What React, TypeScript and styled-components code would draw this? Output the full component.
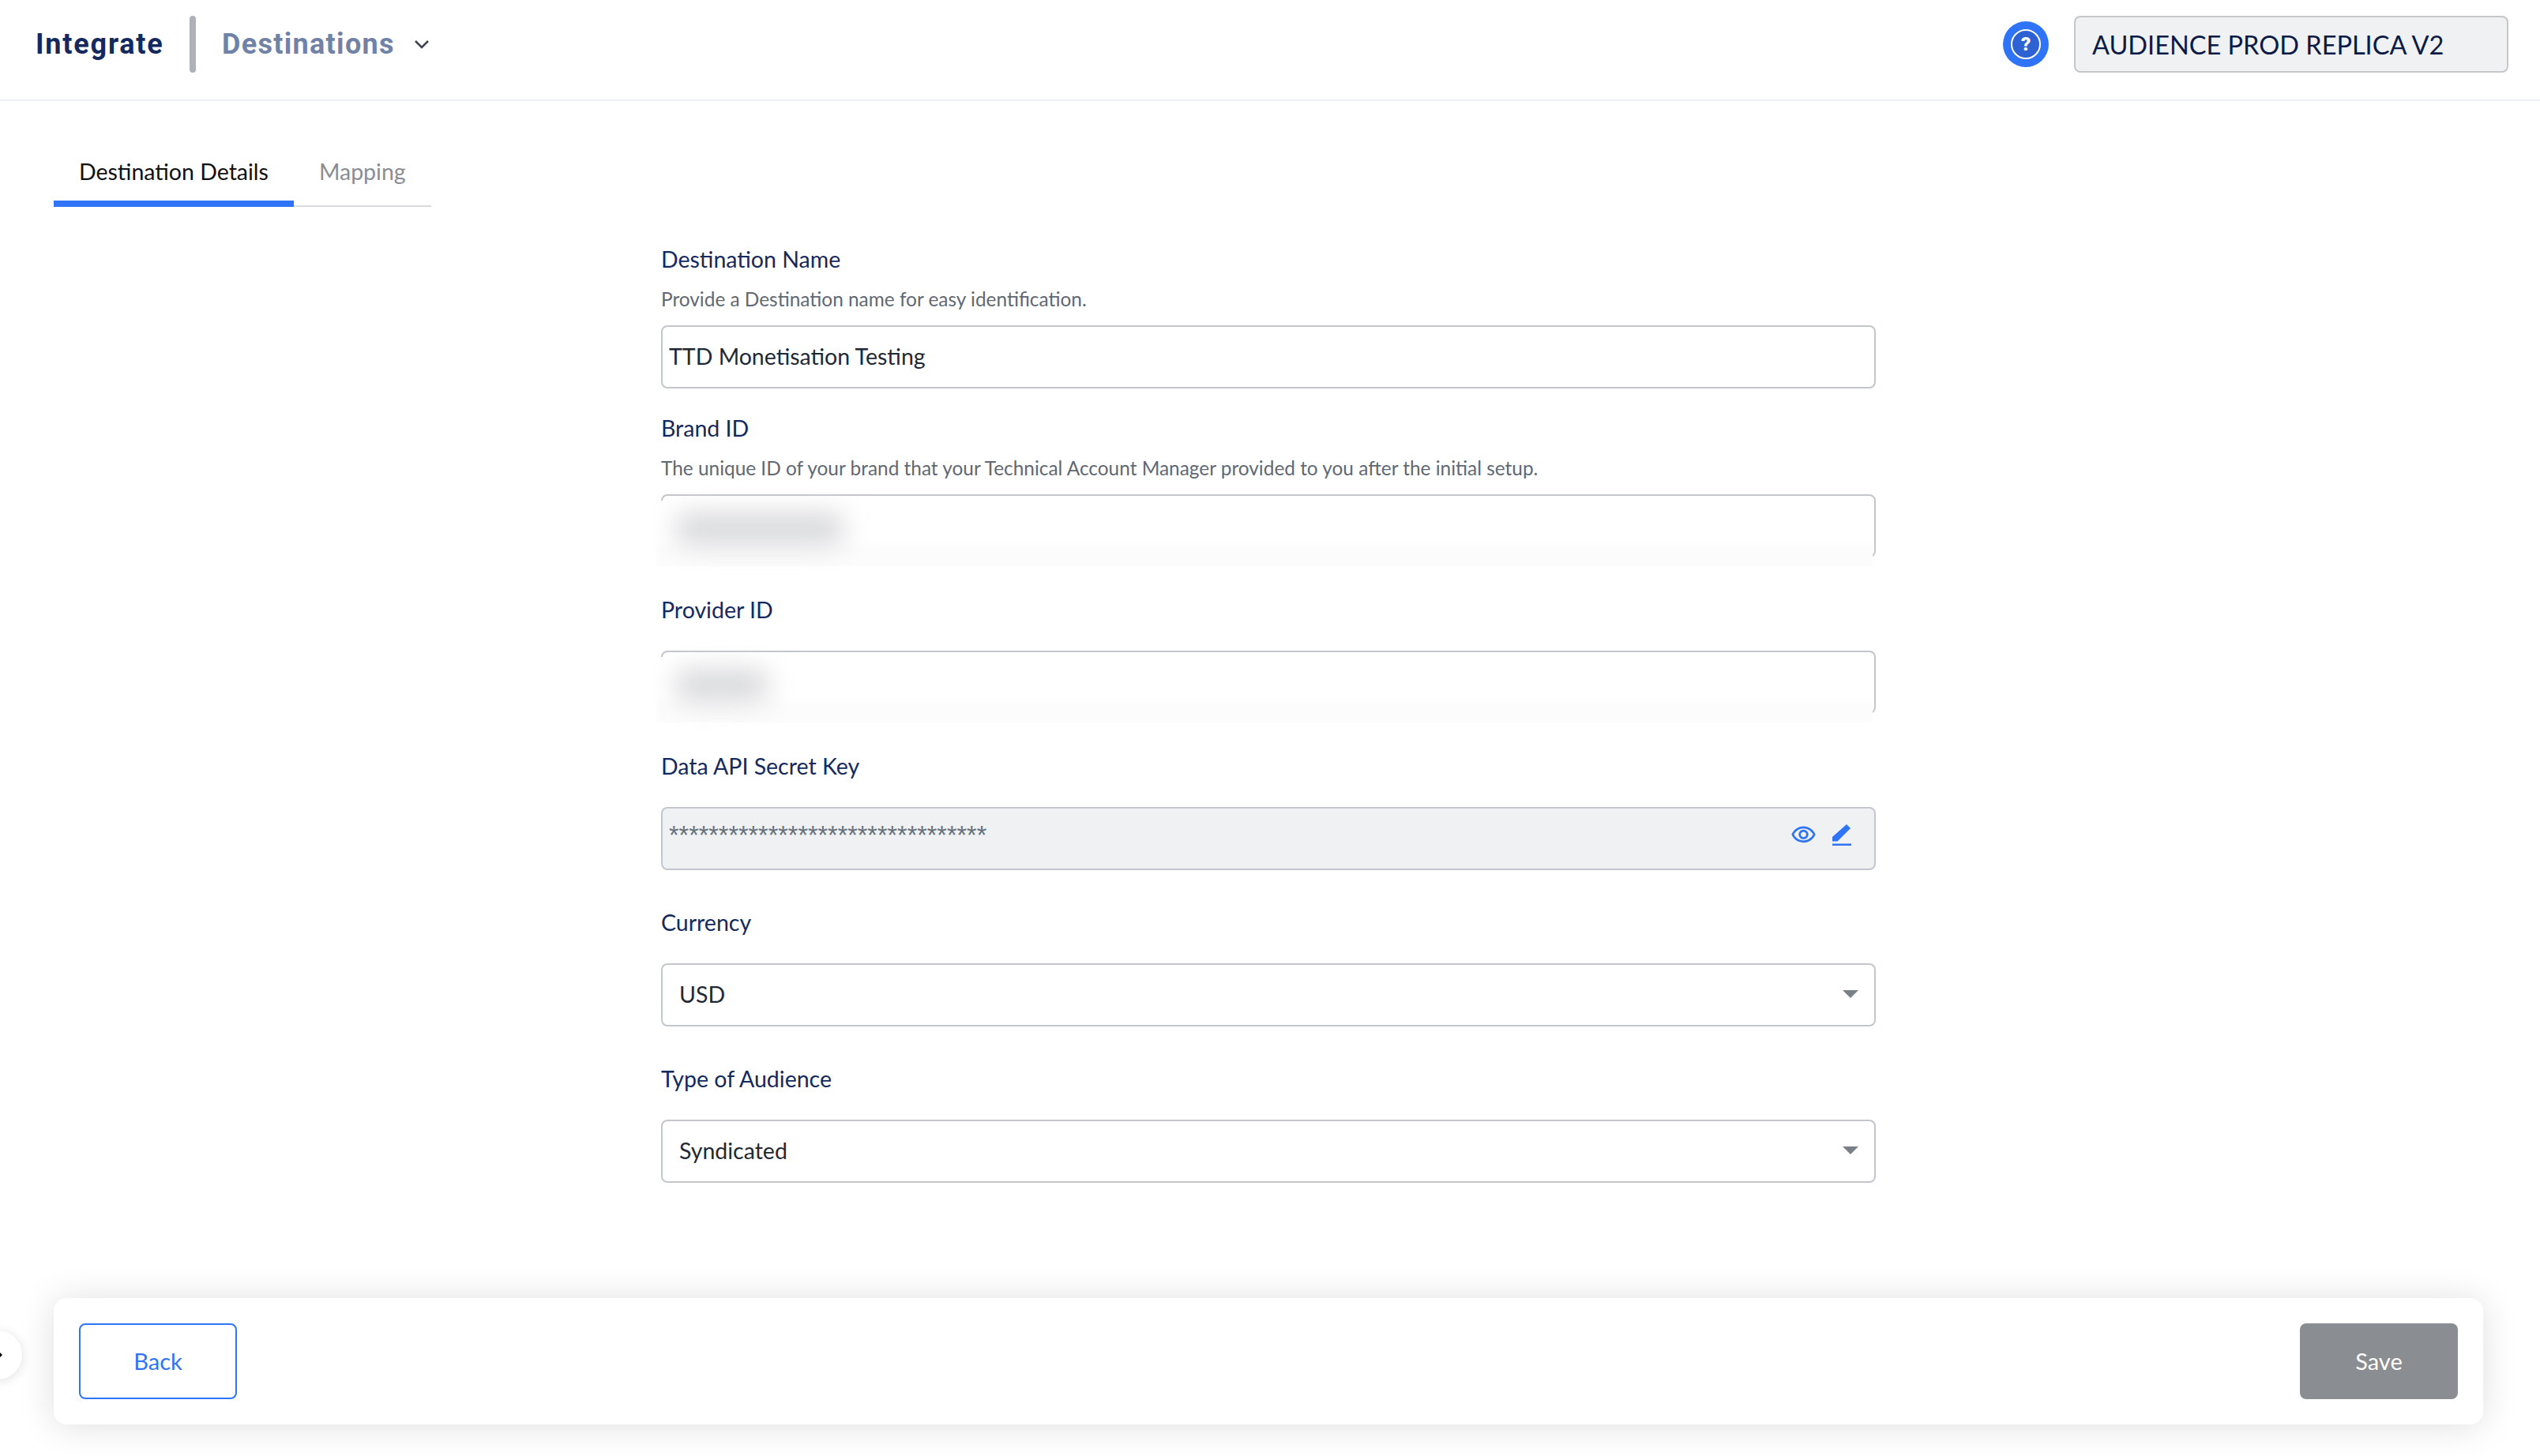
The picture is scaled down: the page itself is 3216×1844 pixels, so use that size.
import React from 'react';
import styled, { createGlobalStyle } from 'styled-components';

const GlobalStyle = createGlobalStyle`
  html, body {
    margin: 0;
    padding: 0;
    background: #fff;
    overflow: hidden;
  }
  * {
    box-sizing: border-box;
  }
`;

const App: React.FC = () => {
  return (
    <>
      <GlobalStyle />
      <Page>
        <Header>
          <HeaderLeft>
            <Brand>Integrate</Brand>
            <Divider />
            <Section>Destinations</Section>
            <Chevron viewBox="0 0 18 10">
              <polyline points="1,1 9,9 17,1" />
            </Chevron>
          </HeaderLeft>
          <HeaderRight>
            <HelpButton>
              <HelpRing>?</HelpRing>
            </HelpButton>
            <AccountSelect>AUDIENCE PROD REPLICA V2</AccountSelect>
          </HeaderRight>
        </Header>

        <Tabs>
          <Tab $active>Destination Details</Tab>
          <Tab>Mapping</Tab>
        </Tabs>

        <Form>
          <Field $compact>
            <Label>Destination Name</Label>
            <Hint>Provide a Destination name for easy identification.</Hint>
            <Input>TTD Monetisation Testing</Input>
          </Field>
          <Field>
            <Label>Brand ID</Label>
            <Hint>The unique ID of your brand that your Technical Account Manager provided to you after the initial setup.</Hint>
            <Input>
              <Redaction>
                <Smudge $width={218} />
              </Redaction>
            </Input>
          </Field>
          <Field>
            <Label>Provider ID</Label>
            <Input>
              <Redaction>
                <Smudge $width={122} />
              </Redaction>
            </Input>
          </Field>
          <Field>
            <Label>Data API Secret Key</Label>
            <Input $disabled>
              <Secret>********************************</Secret>
              <InputActions>
                <EyeIcon viewBox="0 0 24 24">
                  <path d="M12 6c3.79 0 7.17 2.13 8.82 5.5C19.17 14.87 15.79 17 12 17s-7.17-2.13-8.82-5.5C4.83 8.13 8.21 6 12 6m0-2C7 4 2.73 7.11 1 11.5 2.73 15.89 7 19 12 19s9.27-3.11 11-7.5C21.27 7.11 17 4 12 4zm0 5c1.38 0 2.5 1.12 2.5 2.5S13.38 14 12 14s-2.5-1.12-2.5-2.5S10.62 9 12 9m0-2c-2.48 0-4.5 2.02-4.5 4.5S9.52 16 12 16s4.5-2.02 4.5-4.5S14.48 7 12 7z" />
                </EyeIcon>
                <PencilIcon viewBox="0 0 24 28">
                  <polygon points="0,16 18,0 23,5 6.500,21.500 0,21.500" />
                  <rect x="0" y="24.500" width="24" height="2.500" />
                </PencilIcon>
              </InputActions>
            </Input>
          </Field>
          <Field>
            <Label>Currency</Label>
            <Select>
              USD
              <Caret />
            </Select>
          </Field>
          <Field>
            <Label>Type of Audience</Label>
            <Select>
              Syndicated
              <Caret />
            </Select>
          </Field>
        </Form>

        <Footer>
          <SideToggle>
            <SideArrow />
          </SideToggle>
          <BackButton>Back</BackButton>
          <SaveButton>Save</SaveButton>
        </Footer>
      </Page>
    </>
  );
};

const bodyFont = `Lato, "Noto Sans", sans-serif`;

const Page = styled.div`
  display: flex;
  flex-direction: column;
  height: 100vh;
  font-family: ${bodyFont};
`;

const Header = styled.header`
  display: flex;
  align-items: center;
  justify-content: space-between;
  flex: none;
  height: 128px;
  padding: 0 40px 14px 45px;
  border-bottom: 2px solid #eef0f3;
`;

const HeaderLeft = styled.div`
  display: flex;
  align-items: center;
`;

const Brand = styled.div`
  width: 162px;
  font-family: Roboto, sans-serif;
  font-size: 36px;
  font-weight: 700;
  letter-spacing: 1.8px;
  color: #14295e;
  white-space: nowrap;
`;

const Divider = styled.div`
  width: 8px;
  height: 72px;
  margin: 0 33px 0 33px;
  border-radius: 4px;
  background: #aeb1b7;
`;

const Section = styled.div`
  width: 218px;
  font-family: Roboto, sans-serif;
  font-size: 36px;
  font-weight: 700;
  letter-spacing: 1.3px;
  color: #7082a6;
  white-space: nowrap;
`;

const Chevron = styled.svg`
  width: 18px;
  height: 10px;
  margin-left: 26px;
  overflow: visible;
  fill: none;
  stroke: #3b4450;
  stroke-width: 2.5;
`;

const HeaderRight = styled.div`
  display: flex;
  align-items: center;
  gap: 32px;
`;

const HelpButton = styled.div`
  display: flex;
  align-items: center;
  justify-content: center;
  width: 58px;
  height: 58px;
  border-radius: 50%;
  background: #2f73f6;
`;

const HelpRing = styled.div`
  display: flex;
  align-items: center;
  justify-content: center;
  width: 38px;
  height: 38px;
  border: 2.5px solid #fff;
  border-radius: 50%;
  background: #2e62d2;
  color: #fff;
  font-family: Roboto, sans-serif;
  font-size: 24px;
  font-weight: 900;
`;

const AccountSelect = styled.div`
  display: flex;
  align-items: center;
  width: 550px;
  height: 72px;
  padding-left: 21px;
  border: 2.5px solid #c4c6c9;
  border-radius: 8px;
  background: #eff1f3;
  color: #0c1a45;
  font-size: 32.500px;
  white-space: nowrap;
`;

const Tabs = styled.div`
  display: flex;
  flex: none;
  width: 478px;
  height: 134px;
  margin-left: 68px;
  border-bottom: 2px solid #d9dbde;
`;

const Tab = styled.div<{ $active?: boolean }>`
  display: flex;
  align-items: center;
  height: 134px;
  padding: 52px 32px 0;
  border-bottom: 8px solid ${(p) => (p.$active ? '#2f73f6' : 'transparent')};
  color: ${(p) => (p.$active ? '#111' : '#8a8d91')};
  font-size: 28.500px;
  white-space: nowrap;
`;

const Form = styled.div`
  display: flex;
  flex-direction: column;
  flex: none;
  width: 1538px;
  margin: 46px 0 0 837px;
`;

const Field = styled.div<{ $compact?: boolean }>`
  display: flex;
  flex-direction: column;
  margin-bottom: ${(p) => (p.$compact ? '30px' : '46px')};

  &:last-child {
    margin-bottom: 0;
  }
`;

const Label = styled.div`
  height: 40px;
  margin-bottom: 32px;
  color: #14295e;
  font-size: 28.500px;
  line-height: 40px;
  white-space: nowrap;

  &:has(+ div[data-hint]) {
    margin-bottom: 15px;
  }
`;

const Hint = styled.div.attrs({ 'data-hint': true })`
  height: 32px;
  margin-bottom: 17px;
  color: #5f6873;
  font-size: 24.400px;
  line-height: 32px;
  white-space: nowrap;
`;

const Input = styled.div<{ $disabled?: boolean }>`
  position: relative;
  display: flex;
  align-items: center;
  justify-content: space-between;
  height: 80px;
  padding: 0 0 2px 8px;
  border: 2.5px solid #c3c7cd;
  border-radius: 8px;
  background: ${(p) => (p.$disabled ? '#eff1f3' : '#fff')};
  color: #1f2933;
  font-size: 28.500px;
  white-space: nowrap;
`;

const Redaction = styled.div`
  position: absolute;
  top: 6px;
  left: -8px;
  right: 2px;
  bottom: -13px;
  background: linear-gradient(#fff 60%, #fcfcfc 75%);
`;

const Smudge = styled.div<{ $width: number }>`
  position: absolute;
  top: 14px;
  left: 22px;
  width: ${(p) => p.$width}px;
  height: 44px;
  border-radius: 22px;
  background: #dadbdd;
  filter: blur(16px);
`;

const Secret = styled.div`
  margin-top: -6px;
  color: #68727d;
  font-family: "Liberation Sans", sans-serif;
  font-size: 32.300px;
`;

const InputActions = styled.div`
  display: flex;
  align-items: center;
  margin-top: -7px;
  margin-right: 29px;
  gap: 20px;
`;

const EyeIcon = styled.svg`
  width: 33px;
  height: 33px;
  fill: #2f73f6;
`;

const PencilIcon = styled.svg`
  width: 24px;
  height: 28px;
  fill: #2f73f6;
`;

const Select = styled(Input)`
  padding-left: 21px;
  padding-right: 20px;
`;

const Caret = styled.div`
  width: 0;
  height: 0;
  border-left: 10px solid transparent;
  border-right: 10px solid transparent;
  border-top: 10px solid #7a8087;
`;

const Footer = styled.footer`
  position: relative;
  display: flex;
  align-items: center;
  justify-content: space-between;
  flex: none;
  height: 160px;
  margin: auto 72px 40px 68px;
  padding: 0 32px;
  border-radius: 16px;
  background: #fff;
  box-shadow: 0 2px 46px rgba(0, 0, 0, 0.13);
`;

const SideToggle = styled.div`
  position: absolute;
  top: 41px;
  left: -102px;
  width: 62px;
  height: 62px;
  border-radius: 50%;
  background: #fff;
  box-shadow: 0 2px 14px rgba(0, 0, 0, 0.12);
`;

const SideArrow = styled.div`
  position: absolute;
  top: 25px;
  right: 25px;
  width: 0;
  height: 0;
  border-top: 6px solid transparent;
  border-bottom: 6px solid transparent;
  border-left: 6px solid #000;
`;

const BackButton = styled.div`
  display: flex;
  align-items: center;
  justify-content: center;
  width: 200px;
  height: 96px;
  padding-bottom: 2px;
  border: 2.5px solid #2f73f6;
  border-radius: 8px;
  color: #2f73f6;
  font-size: 29px;
`;

const SaveButton = styled.div`
  display: flex;
  align-items: center;
  justify-content: center;
  width: 200px;
  height: 96px;
  padding-bottom: 2px;
  border-radius: 8px;
  background: #8a8d91;
  color: #fff;
  font-size: 29px;
`;

export default React.memo(App);
